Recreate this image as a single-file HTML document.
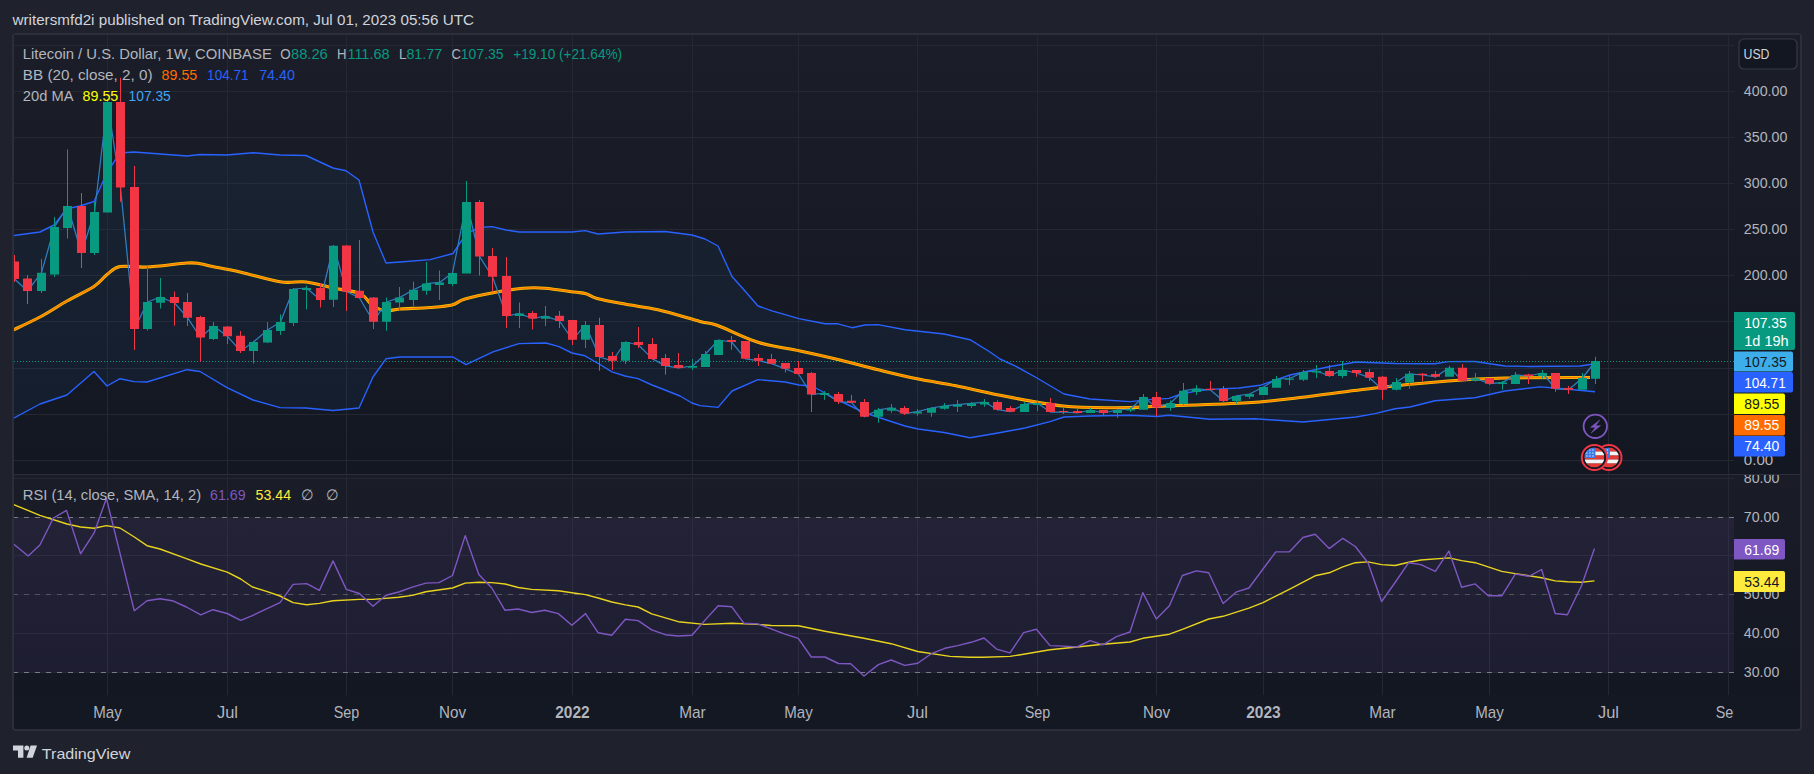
<!DOCTYPE html><html><head><meta charset="utf-8"><style>
html,body{margin:0;padding:0;width:1814px;height:774px;overflow:hidden;background:#1f222c;}
svg{position:absolute;left:0;top:0;display:block;}
text{font-family:"Liberation Sans",sans-serif;white-space:pre;}
</style></head><body>
<svg width="1814" height="774" viewBox="0 0 1814 774">
<defs>
<linearGradient id="bgm" gradientUnits="userSpaceOnUse" x1="0" y1="35" x2="0" y2="474"><stop offset="0" stop-color="#1b1e28"/><stop offset="1" stop-color="#131722"/></linearGradient>
<linearGradient id="bgr" gradientUnits="userSpaceOnUse" x1="0" y1="475" x2="0" y2="695"><stop offset="0" stop-color="#1a1d27"/><stop offset="1" stop-color="#131722"/></linearGradient>
<clipPath id="mainclip"><rect x="14" y="35" width="1720" height="439"/></clipPath>
<clipPath id="rsiclip"><rect x="14" y="476" width="1720" height="219"/></clipPath>
<clipPath id="flagc"><circle cx="0" cy="0" r="10"/></clipPath>
</defs>
<text x="12.5" y="24.8" font-size="15" fill="#d1d4dc" text-anchor="start" font-weight="normal" textLength="461.5" lengthAdjust="spacingAndGlyphs">writersmfd2i published on TradingView.com, Jul 01, 2023 05:56 UTC</text>
<rect x="13" y="34" width="1788" height="696" rx="3" fill="#141822" stroke="#2c2f3a" stroke-width="2"/>
<rect x="14" y="35" width="1786" height="440" fill="url(#bgm)"/>
<rect x="14" y="475" width="1786" height="220" fill="url(#bgr)"/>
<path d="M14,45.5H1734 M14,91.5H1734 M14,137.5H1734 M14,183.5H1734 M14,229.5H1734 M14,275.5H1734 M14,321.5H1734 M14,368.5H1734 M14,414.5H1734 M14,460.5H1734 M107.5,35V474 M107.5,476V695 M227.5,35V474 M227.5,476V695 M346.5,35V474 M346.5,476V695 M452.5,35V474 M452.5,476V695 M572.5,35V474 M572.5,476V695 M692.5,35V474 M692.5,476V695 M798.5,35V474 M798.5,476V695 M917.5,35V474 M917.5,476V695 M1037.5,35V474 M1037.5,476V695 M1156.5,35V474 M1156.5,476V695 M1263.5,35V474 M1263.5,476V695 M1382.5,35V474 M1382.5,476V695 M1489.5,35V474 M1489.5,476V695 M1608.5,35V474 M1608.5,476V695 M1728.5,35V474 M1728.5,476V695 M14,478.5H1734 M14,555.5H1734 M14,633.5H1734" stroke="#252732" stroke-width="1" fill="none"/>
<path d="M14,474.5H1800" stroke="#2c2f3a" stroke-width="1"/>
<g clip-path="url(#mainclip)">
<polygon points="12.0,235.8 40.0,232.0 54.0,225.0 67.0,208.7 80.0,206.0 94.0,201.5 107.0,172.5 120.0,153.0 134.0,152.0 187.0,156.0 200.0,154.5 227.0,155.0 253.0,152.7 280.0,155.0 306.0,155.5 320.0,162.0 333.0,168.0 346.0,170.7 359.0,180.0 373.0,232.0 386.0,263.0 400.0,262.0 430.0,259.6 453.0,253.5 466.0,234.0 479.0,227.5 492.0,226.6 506.0,230.0 519.0,232.0 546.0,232.0 572.0,232.0 585.0,230.6 598.0,234.0 625.0,232.0 665.0,231.5 692.0,235.0 705.0,239.0 718.0,246.0 732.0,276.5 745.0,291.0 758.0,306.0 772.0,310.8 799.0,318.6 825.0,323.8 838.0,323.8 852.0,327.7 865.0,325.0 878.0,324.6 905.0,329.7 944.0,334.0 970.0,339.7 990.0,352.0 1000.0,359.0 1015.0,365.8 1037.0,378.0 1064.0,394.0 1090.0,399.0 1130.0,401.6 1152.0,399.4 1169.0,398.4 1181.0,394.0 1195.0,391.2 1210.0,389.4 1239.0,388.0 1260.0,385.3 1290.0,375.0 1329.0,366.7 1356.0,362.0 1395.0,363.5 1435.0,363.7 1448.0,361.6 1475.0,361.5 1505.0,366.0 1530.0,366.5 1580.0,366.0 1595.0,363.7 1595.0,391.7 1555.0,388.0 1540.0,386.9 1505.0,391.0 1475.0,397.8 1435.0,400.8 1410.0,407.0 1395.0,408.8 1375.0,413.6 1356.0,417.0 1303.0,422.0 1255.0,418.8 1210.0,419.2 1169.0,415.2 1157.0,416.5 1130.0,415.2 1090.0,416.0 1064.0,417.0 1050.0,421.6 1025.0,428.0 998.0,433.0 970.0,437.8 944.0,432.5 918.0,429.0 905.0,426.0 865.0,413.0 838.0,400.0 812.0,386.0 799.0,385.0 785.0,382.0 758.0,379.6 732.0,391.0 718.0,407.4 700.0,405.6 692.0,403.0 680.0,396.0 665.0,390.0 652.0,385.0 638.0,378.6 625.0,376.0 612.0,371.8 599.0,364.0 585.0,355.8 572.0,353.0 559.0,346.6 546.0,343.0 519.0,343.6 493.0,351.8 466.0,364.7 453.0,357.0 430.0,357.0 400.0,357.0 386.0,358.8 373.0,377.0 359.0,408.0 333.0,410.5 306.0,408.0 280.0,407.6 253.0,400.0 227.0,387.7 200.0,371.5 187.0,369.7 147.0,382.0 134.0,381.6 120.0,378.7 107.0,386.0 94.0,371.5 67.0,395.0 40.0,404.0 12.0,419.0" fill="rgba(33,150,243,0.055)"/>
<polyline points="12.0,235.8 40.0,232.0 54.0,225.0 67.0,208.7 80.0,206.0 94.0,201.5 107.0,172.5 120.0,153.0 134.0,152.0 187.0,156.0 200.0,154.5 227.0,155.0 253.0,152.7 280.0,155.0 306.0,155.5 320.0,162.0 333.0,168.0 346.0,170.7 359.0,180.0 373.0,232.0 386.0,263.0 400.0,262.0 430.0,259.6 453.0,253.5 466.0,234.0 479.0,227.5 492.0,226.6 506.0,230.0 519.0,232.0 546.0,232.0 572.0,232.0 585.0,230.6 598.0,234.0 625.0,232.0 665.0,231.5 692.0,235.0 705.0,239.0 718.0,246.0 732.0,276.5 745.0,291.0 758.0,306.0 772.0,310.8 799.0,318.6 825.0,323.8 838.0,323.8 852.0,327.7 865.0,325.0 878.0,324.6 905.0,329.7 944.0,334.0 970.0,339.7 990.0,352.0 1000.0,359.0 1015.0,365.8 1037.0,378.0 1064.0,394.0 1090.0,399.0 1130.0,401.6 1152.0,399.4 1169.0,398.4 1181.0,394.0 1195.0,391.2 1210.0,389.4 1239.0,388.0 1260.0,385.3 1290.0,375.0 1329.0,366.7 1356.0,362.0 1395.0,363.5 1435.0,363.7 1448.0,361.6 1475.0,361.5 1505.0,366.0 1530.0,366.5 1580.0,366.0 1595.0,363.7" fill="none" stroke="#2962ff" stroke-width="1.4" stroke-linejoin="round"/>
<polyline points="12.0,419.0 40.0,404.0 67.0,395.0 94.0,371.5 107.0,386.0 120.0,378.7 134.0,381.6 147.0,382.0 187.0,369.7 200.0,371.5 227.0,387.7 253.0,400.0 280.0,407.6 306.0,408.0 333.0,410.5 359.0,408.0 373.0,377.0 386.0,358.8 400.0,357.0 430.0,357.0 453.0,357.0 466.0,364.7 493.0,351.8 519.0,343.6 546.0,343.0 559.0,346.6 572.0,353.0 585.0,355.8 599.0,364.0 612.0,371.8 625.0,376.0 638.0,378.6 652.0,385.0 665.0,390.0 680.0,396.0 692.0,403.0 700.0,405.6 718.0,407.4 732.0,391.0 758.0,379.6 785.0,382.0 799.0,385.0 812.0,386.0 838.0,400.0 865.0,413.0 905.0,426.0 918.0,429.0 944.0,432.5 970.0,437.8 998.0,433.0 1025.0,428.0 1050.0,421.6 1064.0,417.0 1090.0,416.0 1130.0,415.2 1157.0,416.5 1169.0,415.2 1210.0,419.2 1255.0,418.8 1303.0,422.0 1356.0,417.0 1375.0,413.6 1395.0,408.8 1410.0,407.0 1435.0,400.8 1475.0,397.8 1505.0,391.0 1540.0,386.9 1555.0,388.0 1595.0,391.7" fill="none" stroke="#2962ff" stroke-width="1.4" stroke-linejoin="round"/>
<path d="M14,361.5H1734" stroke="#089981" stroke-width="1" stroke-dasharray="1 2"/>
<path d="M12.0,330.6 C16.7,328.3 30.8,321.9 40.0,317.0 C49.2,312.1 58.0,306.1 67.0,301.0 C76.0,295.9 87.3,290.9 94.0,286.5 C100.7,282.1 102.7,277.8 107.0,274.5 C111.3,271.2 113.3,267.9 120.0,266.6 C126.7,265.4 135.8,267.6 147.0,267.0 C158.2,266.4 178.2,263.6 187.0,263.0 C195.8,262.4 196.2,263.2 200.0,263.7 C203.8,264.2 203.3,264.6 210.0,266.0 C216.7,267.4 228.3,269.4 240.0,272.0 C251.7,274.6 269.0,280.1 280.0,281.8 C291.0,283.5 297.2,281.0 306.0,282.0 C314.8,283.0 324.0,286.1 333.0,288.0 C342.0,289.9 353.3,290.7 360.0,293.7 C366.7,296.7 368.7,303.2 373.0,306.0 C377.3,308.8 381.5,310.2 386.0,310.7 C390.5,311.2 392.7,309.5 400.0,309.0 C407.3,308.5 421.3,308.2 430.0,307.5 C438.7,306.8 446.2,306.4 452.0,305.0 C457.8,303.6 457.5,301.2 465.0,299.0 C472.5,296.8 487.3,293.8 497.0,292.0 C506.7,290.2 515.0,288.8 523.0,288.2 C531.0,287.6 536.5,287.6 545.0,288.2 C553.5,288.8 567.2,291.1 574.0,292.0 C580.8,292.9 582.2,292.6 586.0,293.7 C589.8,294.8 590.3,296.7 597.0,298.5 C603.7,300.3 615.8,302.4 626.0,304.3 C636.2,306.2 645.7,307.0 658.0,309.8 C670.3,312.6 690.2,318.8 700.0,321.4 C709.8,324.0 707.3,321.8 717.0,325.3 C726.7,328.8 744.2,338.0 758.0,342.3 C771.8,346.6 786.3,348.1 800.0,351.0 C813.7,353.9 827.2,356.9 840.0,360.0 C852.8,363.1 864.2,366.4 877.0,369.5 C889.8,372.6 903.8,376.1 917.0,378.8 C930.2,381.5 942.2,383.1 956.0,385.8 C969.8,388.6 982.2,391.9 1000.0,395.3 C1017.8,398.7 1043.7,403.9 1063.0,406.0 C1082.3,408.1 1099.0,407.7 1116.0,407.7 C1133.0,407.7 1143.0,406.8 1165.0,406.0 C1187.0,405.2 1225.5,404.2 1248.0,402.8 C1270.5,401.4 1278.8,400.0 1300.0,397.5 C1321.2,395.0 1350.3,390.8 1375.0,388.0 C1399.7,385.2 1426.3,382.7 1448.0,381.0 C1469.7,379.3 1481.3,378.6 1505.0,378.0 C1528.7,377.4 1575.8,377.6 1590.0,377.5" fill="none" stroke="#f7c600" stroke-width="3.1" stroke-linejoin="round"/>
<path d="M12.0,330.6 C16.7,328.3 30.8,321.9 40.0,317.0 C49.2,312.1 58.0,306.1 67.0,301.0 C76.0,295.9 87.3,290.9 94.0,286.5 C100.7,282.1 102.7,277.8 107.0,274.5 C111.3,271.2 113.3,267.9 120.0,266.6 C126.7,265.4 135.8,267.6 147.0,267.0 C158.2,266.4 178.2,263.6 187.0,263.0 C195.8,262.4 196.2,263.2 200.0,263.7 C203.8,264.2 203.3,264.6 210.0,266.0 C216.7,267.4 228.3,269.4 240.0,272.0 C251.7,274.6 269.0,280.1 280.0,281.8 C291.0,283.5 297.2,281.0 306.0,282.0 C314.8,283.0 324.0,286.1 333.0,288.0 C342.0,289.9 353.3,290.7 360.0,293.7 C366.7,296.7 368.7,303.2 373.0,306.0 C377.3,308.8 381.5,310.2 386.0,310.7 C390.5,311.2 392.7,309.5 400.0,309.0 C407.3,308.5 421.3,308.2 430.0,307.5 C438.7,306.8 446.2,306.4 452.0,305.0 C457.8,303.6 457.5,301.2 465.0,299.0 C472.5,296.8 487.3,293.8 497.0,292.0 C506.7,290.2 515.0,288.8 523.0,288.2 C531.0,287.6 536.5,287.6 545.0,288.2 C553.5,288.8 567.2,291.1 574.0,292.0 C580.8,292.9 582.2,292.6 586.0,293.7 C589.8,294.8 590.3,296.7 597.0,298.5 C603.7,300.3 615.8,302.4 626.0,304.3 C636.2,306.2 645.7,307.0 658.0,309.8 C670.3,312.6 690.2,318.8 700.0,321.4 C709.8,324.0 707.3,321.8 717.0,325.3 C726.7,328.8 744.2,338.0 758.0,342.3 C771.8,346.6 786.3,348.1 800.0,351.0 C813.7,353.9 827.2,356.9 840.0,360.0 C852.8,363.1 864.2,366.4 877.0,369.5 C889.8,372.6 903.8,376.1 917.0,378.8 C930.2,381.5 942.2,383.1 956.0,385.8 C969.8,388.6 982.2,391.9 1000.0,395.3 C1017.8,398.7 1043.7,403.9 1063.0,406.0 C1082.3,408.1 1099.0,407.7 1116.0,407.7 C1133.0,407.7 1143.0,406.8 1165.0,406.0 C1187.0,405.2 1225.5,404.2 1248.0,402.8 C1270.5,401.4 1278.8,400.0 1300.0,397.5 C1321.2,395.0 1350.3,390.8 1375.0,388.0 C1399.7,385.2 1426.3,382.7 1448.0,381.0 C1469.7,379.3 1481.3,378.6 1505.0,378.0 C1528.7,377.4 1575.8,377.6 1590.0,377.5" fill="none" stroke="#ff7a00" stroke-width="1.5" stroke-linejoin="round"/>
<polyline points="14.0,268.0 14.5,279.0 27.5,291.0 41.5,272.7 54.5,227.0 67.5,206.0 81.5,253.0 94.5,212.0 107.5,102.0 120.5,187.5 134.5,329.0 147.5,302.0 160.5,297.0 174.5,303.0 187.5,317.7 200.5,337.6 213.5,326.0 227.5,336.3 240.5,351.0 253.5,342.0 267.5,330.0 280.5,322.0 293.5,289.0 306.5,288.0 320.5,300.0 333.5,245.7 346.5,291.5 359.5,298.0 373.5,321.7 386.5,302.0 399.5,297.6 413.5,289.8 426.5,283.6 439.5,282.4 452.5,273.0 466.5,202.0 479.5,256.4 492.5,276.8 506.5,316.0 519.5,313.6 532.5,318.5 545.5,316.2 559.5,321.0 572.5,339.7 585.5,324.9 599.5,357.0 612.5,360.8 625.5,342.0 638.5,345.0 652.5,358.9 665.5,365.9 678.5,367.8 692.5,366.0 705.5,354.0 718.5,340.0 731.5,342.0 745.5,358.8 758.5,360.7 771.5,363.7 785.5,368.8 798.5,374.0 811.5,394.6 824.5,393.0 838.5,401.7 851.5,402.7 864.5,416.8 878.5,409.8 891.5,407.8 904.5,413.6 917.5,411.7 931.5,408.0 944.5,405.9 957.5,404.6 971.5,403.3 984.5,402.0 997.5,409.7 1010.5,411.7 1024.5,404.0 1037.5,403.3 1050.5,412.0 1063.5,412.0 1077.5,413.0 1090.5,410.0 1103.5,413.0 1117.5,410.0 1130.5,409.0 1143.5,397.0 1156.5,407.5 1170.5,403.0 1183.5,390.7 1196.5,388.8 1210.5,390.0 1223.5,401.0 1236.5,395.9 1249.5,394.0 1263.5,387.0 1276.5,379.0 1289.5,378.5 1303.5,372.0 1316.5,371.0 1329.5,376.0 1342.5,370.0 1356.5,373.0 1369.5,377.7 1382.5,389.7 1396.5,382.0 1409.5,373.8 1422.5,375.0 1435.5,376.8 1449.5,367.8 1462.5,380.7 1475.5,378.5 1489.5,383.7 1502.5,382.6 1515.5,374.9 1528.5,376.0 1542.5,373.0 1555.5,388.8 1568.5,389.7 1582.5,378.0 1595.5,361.0" fill="none" stroke="#2f7fc0" stroke-width="1.25" stroke-linejoin="round"/>
<path d="M37.0,272.7h9v18.3h-9z M41.0,259.0h1v34.0h-1z M50.0,227.0h9v47.6h-9z M54.0,217.0h1v60.0h-1z M63.0,206.0h9v22.0h-9z M67.0,149.5h1v89.1h-1z M90.0,212.0h9v41.0h-9z M94.0,202.0h1v53.0h-1z M103.0,102.0h9v110.6h-9z M107.0,99.0h1v113.6h-1z M143.0,302.0h9v27.0h-9z M147.0,266.6h1v63.9h-1z M156.0,297.0h9v5.7h-9z M160.0,278.0h1v30.6h-1z M209.0,326.0h9v13.0h-9z M213.0,322.0h1v18.0h-1z M249.0,342.0h9v9.0h-9z M253.0,340.7h1v22.9h-1z M263.0,330.0h9v12.5h-9z M267.0,322.0h1v21.0h-1z M276.0,322.0h9v9.0h-9z M280.0,314.5h1v20.5h-1z M289.0,289.0h9v34.0h-9z M293.0,288.0h1v38.0h-1z M302.0,288.0h9v2.0h-9z M306.0,285.5h1v24.1h-1z M329.0,245.7h9v54.0h-9z M333.0,245.0h1v62.0h-1z M382.0,302.0h9v19.7h-9z M386.0,297.6h1v33.2h-1z M395.0,297.6h9v4.9h-9z M399.0,287.0h1v24.0h-1z M409.0,289.8h9v10.2h-9z M413.0,281.7h1v24.3h-1z M422.0,283.6h9v7.2h-9z M426.0,262.0h1v32.7h-1z M435.0,282.4h9v2.6h-9z M439.0,270.6h1v29.4h-1z M448.0,273.0h9v11.0h-9z M452.0,273.0h1v12.9h-1z M462.0,202.0h9v71.6h-9z M466.0,181.0h1v92.6h-1z M515.0,313.6h9v2.4h-9z M519.0,302.5h1v25.5h-1z M541.0,316.2h9v2.5h-9z M545.0,306.0h1v20.0h-1z M581.0,324.9h9v14.8h-9z M585.0,321.0h1v27.0h-1z M621.0,342.0h9v18.8h-9z M625.0,342.0h1v22.0h-1z M688.0,366.0h9v1.8h-9z M692.0,359.0h1v11.0h-1z M701.0,354.0h9v13.0h-9z M705.0,351.0h1v16.0h-1z M714.0,340.0h9v15.0h-9z M718.0,340.0h1v15.0h-1z M820.0,393.0h9v2.0h-9z M824.0,391.0h1v8.8h-1z M874.0,409.8h9v7.0h-9z M878.0,408.0h1v14.8h-1z M887.0,407.8h9v2.9h-9z M891.0,404.0h1v8.7h-1z M913.0,411.7h9v1.9h-9z M917.0,409.0h1v6.8h-1z M927.0,408.0h9v4.7h-9z M931.0,407.0h1v9.8h-1z M940.0,405.9h9v2.9h-9z M944.0,403.0h1v6.7h-1z M953.0,404.6h9v2.2h-9z M957.0,400.0h1v12.0h-1z M967.0,403.3h9v2.6h-9z M971.0,402.0h1v5.8h-1z M980.0,402.0h9v2.6h-9z M984.0,399.0h1v7.8h-1z M1020.0,404.0h9v8.0h-9z M1024.0,402.0h1v10.0h-1z M1033.0,403.3h9v1.7h-9z M1037.0,400.0h1v11.0h-1z M1086.0,410.0h9v3.0h-9z M1090.0,408.0h1v5.0h-1z M1113.0,410.0h9v3.0h-9z M1117.0,410.0h1v8.0h-1z M1126.0,409.0h9v1.6h-9z M1130.0,407.5h1v4.5h-1z M1139.0,397.0h9v12.7h-9z M1143.0,394.0h1v15.7h-1z M1166.0,403.0h9v5.0h-9z M1170.0,400.6h1v10.1h-1z M1179.0,390.7h9v13.3h-9z M1183.0,383.0h1v22.0h-1z M1192.0,388.8h9v3.2h-9z M1196.0,384.9h1v10.1h-1z M1232.0,395.9h9v5.1h-9z M1236.0,395.9h1v7.7h-1z M1245.0,394.0h9v2.8h-9z M1249.0,394.0h1v4.8h-1z M1259.0,387.0h9v8.0h-9z M1263.0,387.0h1v8.0h-1z M1272.0,379.0h9v8.8h-9z M1276.0,376.0h1v11.8h-1z M1285.0,378.5h9v1.3h-9z M1289.0,375.0h1v10.0h-1z M1299.0,372.0h9v7.8h-9z M1303.0,370.0h1v11.0h-1z M1312.0,371.0h9v1.6h-9z M1316.0,365.0h1v13.0h-1z M1338.0,370.0h9v6.0h-9z M1342.0,361.0h1v17.0h-1z M1392.0,382.0h9v7.7h-9z M1396.0,378.0h1v12.6h-1z M1405.0,373.8h9v8.8h-9z M1409.0,371.0h1v17.8h-1z M1445.0,367.8h9v9.0h-9z M1449.0,365.8h1v11.0h-1z M1471.0,378.5h9v2.2h-9z M1475.0,373.0h1v8.6h-1z M1498.0,382.6h9v1.4h-9z M1502.0,381.0h1v8.7h-1z M1511.0,374.9h9v9.1h-9z M1515.0,372.0h1v12.0h-1z M1538.0,373.0h9v3.0h-9z M1542.0,370.0h1v8.8h-1z M1578.0,378.0h9v11.7h-9z M1582.0,373.0h1v16.7h-1z M1591.0,361.0h9v17.8h-9z M1595.0,356.8h1v27.2h-1z" fill="#089981"/>
<path d="M10.0,261.6h9v17.4h-9z M14.0,255.0h1v27.0h-1z M23.0,278.5h9v12.5h-9z M27.0,275.0h1v29.0h-1z M77.0,206.0h9v47.0h-9z M81.0,193.0h1v75.0h-1z M116.0,102.0h9v85.5h-9z M120.0,77.7h1v124.0h-1z M130.0,187.0h9v142.0h-9z M134.0,166.0h1v184.0h-1z M170.0,297.0h9v6.0h-9z M174.0,291.6h1v34.1h-1z M183.0,302.0h9v15.7h-9z M187.0,293.0h1v33.0h-1z M196.0,317.0h9v20.6h-9z M200.0,315.8h1v46.0h-1z M223.0,326.5h9v9.8h-9z M227.0,326.0h1v18.0h-1z M236.0,335.8h9v15.2h-9z M240.0,331.0h1v22.0h-1z M316.0,288.0h9v12.0h-9z M320.0,283.0h1v24.6h-1z M342.0,245.6h9v45.9h-9z M346.0,245.0h1v66.0h-1z M355.0,290.8h9v7.2h-9z M359.0,240.0h1v58.0h-1z M369.0,297.6h9v24.1h-9z M373.0,297.0h1v32.0h-1z M475.0,202.0h9v54.4h-9z M479.0,200.0h1v75.5h-1z M488.0,256.0h9v20.8h-9z M492.0,248.0h1v43.5h-1z M502.0,276.0h9v40.0h-9z M506.0,257.0h1v71.0h-1z M528.0,313.0h9v5.5h-9z M532.0,311.0h1v18.5h-1z M555.0,315.8h9v5.2h-9z M559.0,311.0h1v17.0h-1z M568.0,320.0h9v19.7h-9z M572.0,320.0h1v25.0h-1z M595.0,324.9h9v32.1h-9z M599.0,317.8h1v52.9h-1z M608.0,356.0h9v4.8h-9z M612.0,352.0h1v18.0h-1z M634.0,342.0h9v3.0h-9z M638.0,327.0h1v20.9h-1z M648.0,344.0h9v14.9h-9z M652.0,338.0h1v21.8h-1z M661.0,358.0h9v7.9h-9z M665.0,354.0h1v20.7h-1z M674.0,365.0h9v2.8h-9z M678.0,353.0h1v15.5h-1z M727.0,340.0h9v2.0h-9z M731.0,336.0h1v13.7h-1z M741.0,341.0h9v17.8h-9z M745.0,341.0h1v17.8h-1z M754.0,358.0h9v2.7h-9z M758.0,354.0h1v12.0h-1z M767.0,359.0h9v4.7h-9z M771.0,354.0h1v9.7h-1z M781.0,363.0h9v5.8h-9z M785.0,363.0h1v9.6h-1z M794.0,367.9h9v6.1h-9z M798.0,361.0h1v13.6h-1z M807.0,373.0h9v21.6h-9z M811.0,372.0h1v40.0h-1z M834.0,394.0h9v7.7h-9z M838.0,392.0h1v12.0h-1z M847.0,400.8h9v1.9h-9z M851.0,395.0h1v7.7h-1z M860.0,402.0h9v14.8h-9z M864.0,399.0h1v17.8h-1z M900.0,408.0h9v5.6h-9z M904.0,406.0h1v9.0h-1z M993.0,402.0h9v7.7h-9z M997.0,400.3h1v10.3h-1z M1006.0,408.0h9v3.7h-9z M1010.0,406.0h1v5.7h-1z M1046.0,403.0h9v9.0h-9z M1050.0,398.0h1v14.0h-1z M1059.0,411.0h9v1.0h-9z M1063.0,408.0h1v6.0h-1z M1073.0,411.0h9v2.0h-9z M1077.0,408.8h1v4.2h-1z M1099.0,410.0h9v3.0h-9z M1103.0,410.0h1v5.0h-1z M1152.0,397.0h9v10.5h-9z M1156.0,392.0h1v24.0h-1z M1206.0,388.8h9v1.2h-9z M1210.0,381.0h1v9.0h-1z M1219.0,389.0h9v12.0h-9z M1223.0,386.0h1v16.0h-1z M1325.0,371.0h9v5.0h-9z M1329.0,365.0h1v11.8h-1z M1352.0,370.0h9v3.0h-9z M1356.0,370.0h1v6.8h-1z M1365.0,372.0h9v5.7h-9z M1369.0,369.0h1v12.0h-1z M1378.0,376.8h9v12.9h-9z M1382.0,376.0h1v23.7h-1z M1418.0,373.8h9v1.2h-9z M1422.0,373.0h1v8.0h-1z M1431.0,374.0h9v2.8h-9z M1435.0,371.0h1v6.7h-1z M1458.0,367.8h9v12.9h-9z M1462.0,364.0h1v17.6h-1z M1485.0,378.0h9v5.7h-9z M1489.0,378.0h1v7.0h-1z M1524.0,374.6h9v1.4h-9z M1528.0,373.8h1v10.2h-1z M1551.0,373.0h9v15.8h-9z M1555.0,373.0h1v18.7h-1z M1564.0,388.0h9v1.7h-9z M1568.0,386.0h1v8.0h-1z" fill="#f23645"/>
</g>
<g clip-path="url(#rsiclip)">
<rect x="14" y="518" width="1720" height="154" fill="rgba(126,87,194,0.10)"/>
<path d="M14,517.5H1734 M14,594.5H1734 M14,672.5H1734" stroke="#252732" stroke-width="1" fill="none"/>
<path d="M14,517.5H1734 M14,672.5H1734" stroke="#787b86" stroke-width="1" stroke-dasharray="5 6" stroke-dashoffset="1" fill="none"/>
<path d="M14,594.5H1734" stroke="#787b86" stroke-opacity="0.55" stroke-width="1" stroke-dasharray="5 6" stroke-dashoffset="1" fill="none"/>
<polyline points="13.3,504.4 39.9,515.3 67.0,524.0 80.6,527.0 94.1,528.3 106.4,525.6 120.0,528.0 134.3,537.0 147.0,545.7 160.0,549.0 186.4,558.7 200.8,564.0 227.2,572.2 240.7,579.0 252.4,587.0 266.5,591.3 280.0,596.0 293.1,602.6 306.7,604.8 319.4,603.4 333.0,600.8 359.4,599.4 373.0,599.4 398.7,597.3 412.3,595.4 425.9,591.8 452.5,588.0 465.2,583.1 478.8,582.3 491.8,582.6 505.0,584.0 518.2,587.5 531.7,589.4 558.3,590.8 571.9,592.7 585.5,594.6 598.2,598.0 611.8,602.0 625.4,604.9 638.1,607.0 651.7,613.8 678.3,621.7 704.6,624.4 731.8,623.3 757.6,624.4 771.2,625.5 798.3,625.8 824.9,631.2 864.0,638.3 891.1,643.7 917.7,651.5 950.0,656.4 969.9,657.3 983.4,657.3 1010.0,656.4 1023.6,654.3 1050.0,649.7 1077.0,647.0 1102.9,644.2 1130.0,642.0 1142.8,638.3 1169.4,634.2 1182.4,629.3 1208.7,619.0 1223.1,616.3 1248.9,608.1 1263.0,602.6 1289.3,589.3 1315.1,575.8 1329.2,572.8 1342.8,566.8 1355.3,562.7 1368.0,561.9 1381.6,564.6 1395.1,565.5 1408.7,562.2 1420.9,560.0 1448.9,557.9 1461.6,560.6 1475.2,562.7 1501.8,571.4 1515.3,573.6 1541.6,577.7 1555.2,580.9 1567.4,581.7 1581.5,582.3 1594.5,580.9" fill="none" stroke="#e8d31e" stroke-width="1.4" stroke-linejoin="round"/>
<polyline points="13.3,543.8 28.2,556.0 39.9,545.0 53.4,518.0 66.5,510.4 80.6,553.8 94.1,532.9 106.4,498.4 134.3,610.8 147.0,600.7 160.0,598.8 172.3,600.7 186.4,607.0 200.8,614.8 213.0,609.7 227.2,613.5 240.7,620.3 252.4,615.6 266.5,608.9 280.0,602.6 293.1,584.4 306.7,583.6 319.4,590.4 333.0,560.9 346.3,589.4 359.4,593.5 373.0,606.2 386.0,595.3 398.7,592.0 412.3,587.2 425.9,583.1 438.9,582.6 452.5,575.5 465.2,535.6 478.8,574.4 491.8,588.0 505.0,610.3 518.2,609.0 531.7,612.5 544.8,610.3 558.3,613.6 571.9,625.2 585.5,613.6 598.2,632.8 611.8,635.3 625.4,619.3 638.1,620.6 651.7,629.8 665.3,634.7 678.3,636.0 691.9,635.3 704.6,620.6 718.2,605.7 731.8,606.8 744.0,623.3 757.6,623.9 771.2,628.8 784.2,633.9 798.3,638.3 811.3,657.0 824.9,657.0 838.5,663.5 850.7,663.8 864.0,676.0 878.4,664.6 891.1,660.0 904.7,665.4 917.7,663.2 931.3,653.7 944.9,648.3 957.6,645.6 971.2,642.3 984.0,638.0 996.5,649.1 1010.0,652.9 1023.6,632.6 1036.4,629.3 1050.0,645.6 1063.5,646.1 1077.0,647.0 1090.0,640.7 1102.9,644.8 1116.4,636.6 1130.0,632.0 1142.8,592.6 1156.3,619.0 1169.4,605.7 1182.4,575.5 1196.5,570.9 1208.7,572.8 1223.1,603.5 1236.7,591.8 1248.9,588.0 1263.0,569.0 1275.8,551.9 1289.3,551.9 1302.9,537.5 1315.1,534.3 1329.2,548.6 1342.8,538.3 1355.3,546.5 1368.0,562.7 1381.6,601.5 1395.1,582.5 1408.7,562.7 1420.9,564.6 1435.3,571.4 1448.9,551.1 1461.6,587.2 1475.2,583.9 1488.2,595.8 1501.8,595.8 1515.3,574.1 1528.9,576.3 1541.6,569.5 1555.2,613.5 1567.4,614.8 1581.5,585.8 1594.5,548.4" fill="none" stroke="#7e57c2" stroke-width="1.4" stroke-linejoin="round"/>
</g>
<text x="22.8" y="58.7" font-size="15" fill="#b2b5be" text-anchor="start" font-weight="normal" textLength="249.0" lengthAdjust="spacingAndGlyphs">Litecoin / U.S. Dollar, 1W, COINBASE</text>
<text x="280.2" y="58.7" font-size="15" fill="#b2b5be" text-anchor="start" font-weight="normal" textLength="10.4" lengthAdjust="spacingAndGlyphs">O</text>
<text x="291.0" y="58.7" font-size="15" fill="#089981" text-anchor="start" font-weight="normal" textLength="36.8" lengthAdjust="spacingAndGlyphs">88.26</text>
<text x="337.0" y="58.7" font-size="15" fill="#b2b5be" text-anchor="start" font-weight="normal" textLength="9.5" lengthAdjust="spacingAndGlyphs">H</text>
<text x="347.4" y="58.7" font-size="15" fill="#089981" text-anchor="start" font-weight="normal" textLength="42.2" lengthAdjust="spacingAndGlyphs">111.68</text>
<text x="398.9" y="58.7" font-size="15" fill="#b2b5be" text-anchor="start" font-weight="normal" textLength="7.6" lengthAdjust="spacingAndGlyphs">L</text>
<text x="406.4" y="58.7" font-size="15" fill="#089981" text-anchor="start" font-weight="normal" textLength="35.7" lengthAdjust="spacingAndGlyphs">81.77</text>
<text x="451.4" y="58.7" font-size="15" fill="#b2b5be" text-anchor="start" font-weight="normal" textLength="9.4" lengthAdjust="spacingAndGlyphs">C</text>
<text x="460.8" y="58.7" font-size="15" fill="#089981" text-anchor="start" font-weight="normal" textLength="42.8" lengthAdjust="spacingAndGlyphs">107.35</text>
<text x="513.3" y="58.7" font-size="15" fill="#089981" text-anchor="start" font-weight="normal" textLength="108.8" lengthAdjust="spacingAndGlyphs">+19.10 (+21.64%)</text>
<text x="22.8" y="80.2" font-size="15" fill="#b2b5be" text-anchor="start" font-weight="normal" textLength="129.7" lengthAdjust="spacingAndGlyphs">BB (20, close, 2, 0)</text>
<text x="161.6" y="80.2" font-size="15" fill="#ff6d00" text-anchor="start" font-weight="normal" textLength="35.7" lengthAdjust="spacingAndGlyphs">89.55</text>
<text x="207.1" y="80.2" font-size="15" fill="#2962ff" text-anchor="start" font-weight="normal" textLength="41.5" lengthAdjust="spacingAndGlyphs">104.71</text>
<text x="259.2" y="80.2" font-size="15" fill="#2962ff" text-anchor="start" font-weight="normal" textLength="35.7" lengthAdjust="spacingAndGlyphs">74.40</text>
<text x="22.8" y="100.5" font-size="15" fill="#b2b5be" text-anchor="start" font-weight="normal" textLength="50.7" lengthAdjust="spacingAndGlyphs">20d MA</text>
<text x="82.6" y="100.5" font-size="15" fill="#ffff00" text-anchor="start" font-weight="normal" textLength="35.7" lengthAdjust="spacingAndGlyphs">89.55</text>
<text x="128.6" y="100.5" font-size="15" fill="#42a5f5" text-anchor="start" font-weight="normal" textLength="42.2" lengthAdjust="spacingAndGlyphs">107.35</text>
<text x="22.8" y="499.6" font-size="15" fill="#b2b5be" text-anchor="start" font-weight="normal" textLength="178.3" lengthAdjust="spacingAndGlyphs">RSI (14, close, SMA, 14, 2)</text>
<text x="210.1" y="499.6" font-size="15" fill="#7e57c2" text-anchor="start" font-weight="normal" textLength="35.5" lengthAdjust="spacingAndGlyphs">61.69</text>
<text x="255.6" y="499.6" font-size="15" fill="#ffeb3b" text-anchor="start" font-weight="normal" textLength="35.5" lengthAdjust="spacingAndGlyphs">53.44</text>
<text x="301" y="499.6" font-size="15" fill="#b2b5be" text-anchor="start" font-weight="normal" textLength="12.5" lengthAdjust="spacingAndGlyphs">∅</text>
<text x="325.5" y="499.6" font-size="15" fill="#b2b5be" text-anchor="start" font-weight="normal" textLength="12.5" lengthAdjust="spacingAndGlyphs">∅</text>
<text x="1743.8" y="96.2" font-size="15.5" fill="#b2b5be" text-anchor="start" font-weight="normal" textLength="43.6" lengthAdjust="spacingAndGlyphs">400.00</text>
<text x="1743.8" y="142.2" font-size="15.5" fill="#b2b5be" text-anchor="start" font-weight="normal" textLength="43.6" lengthAdjust="spacingAndGlyphs">350.00</text>
<text x="1743.8" y="188.2" font-size="15.5" fill="#b2b5be" text-anchor="start" font-weight="normal" textLength="43.6" lengthAdjust="spacingAndGlyphs">300.00</text>
<text x="1743.8" y="234.2" font-size="15.5" fill="#b2b5be" text-anchor="start" font-weight="normal" textLength="43.6" lengthAdjust="spacingAndGlyphs">250.00</text>
<text x="1743.8" y="280.2" font-size="15.5" fill="#b2b5be" text-anchor="start" font-weight="normal" textLength="43.6" lengthAdjust="spacingAndGlyphs">200.00</text>
<text x="1743.8" y="465.2" font-size="15.5" fill="#b2b5be" text-anchor="start" font-weight="normal" textLength="29.5" lengthAdjust="spacingAndGlyphs">0.00</text>
<clipPath id="raxclip"><rect x="1734" y="475" width="66" height="220"/></clipPath>
<g clip-path="url(#raxclip)">
<text x="1743.8" y="483.2" font-size="15.5" fill="#b2b5be" text-anchor="start" font-weight="normal" textLength="35.5" lengthAdjust="spacingAndGlyphs">80.00</text>
<text x="1743.8" y="522.2" font-size="15.5" fill="#b2b5be" text-anchor="start" font-weight="normal" textLength="35.5" lengthAdjust="spacingAndGlyphs">70.00</text>
<text x="1743.8" y="599.2" font-size="15.5" fill="#b2b5be" text-anchor="start" font-weight="normal" textLength="35.5" lengthAdjust="spacingAndGlyphs">50.00</text>
<text x="1743.8" y="638.2" font-size="15.5" fill="#b2b5be" text-anchor="start" font-weight="normal" textLength="35.5" lengthAdjust="spacingAndGlyphs">40.00</text>
<text x="1743.8" y="677.2" font-size="15.5" fill="#b2b5be" text-anchor="start" font-weight="normal" textLength="35.5" lengthAdjust="spacingAndGlyphs">30.00</text>
</g>
<rect x="1739" y="39" width="58" height="30" rx="5" fill="#131722" stroke="#363a45" stroke-width="1.2"/>
<text x="1743.5" y="58.5" font-size="15" fill="#d1d4dc" text-anchor="start" font-weight="normal" textLength="26" lengthAdjust="spacingAndGlyphs">USD</text>
<path d="M1734,312H1793Q1795,312 1795,314V348Q1795,350 1793,350H1734Z" fill="#089981"/>
<text x="1744.2" y="328" font-size="15" fill="#ffffff" text-anchor="start" font-weight="normal" textLength="42.5" lengthAdjust="spacingAndGlyphs">107.35</text>
<text x="1744.2" y="345.5" font-size="15" fill="#ffffff" text-anchor="start" font-weight="normal" textLength="44.5" lengthAdjust="spacingAndGlyphs">1d 19h</text>
<path d="M1734,351.5H1791Q1793,351.5 1793,353.5V369.5Q1793,371.5 1791,371.5H1734Z" fill="#3daee9"/>
<text x="1744.2" y="367" font-size="15" fill="#131722" text-anchor="start" font-weight="normal" textLength="42.5" lengthAdjust="spacingAndGlyphs">107.35</text>
<path d="M1734,372H1791Q1793,372 1793,374V390.5Q1793,392.5 1791,392.5H1734Z" fill="#2962ff"/>
<text x="1744.2" y="388" font-size="15" fill="#ffffff" text-anchor="start" font-weight="normal" textLength="41.5" lengthAdjust="spacingAndGlyphs">104.71</text>
<path d="M1734,393.5H1783Q1785,393.5 1785,395.5V412Q1785,414 1783,414H1734Z" fill="#ffff00"/>
<text x="1744.2" y="409" font-size="15" fill="#131722" text-anchor="start" font-weight="normal" textLength="35" lengthAdjust="spacingAndGlyphs">89.55</text>
<path d="M1734,415H1783Q1785,415 1785,417V433.5Q1785,435.5 1783,435.5H1734Z" fill="#ff6d00"/>
<text x="1744.2" y="430" font-size="15" fill="#ffffff" text-anchor="start" font-weight="normal" textLength="35" lengthAdjust="spacingAndGlyphs">89.55</text>
<path d="M1734,436H1783Q1785,436 1785,438V454.5Q1785,456.5 1783,456.5H1734Z" fill="#2962ff"/>
<text x="1744.2" y="451.2" font-size="15" fill="#ffffff" text-anchor="start" font-weight="normal" textLength="35" lengthAdjust="spacingAndGlyphs">74.40</text>
<path d="M1734,539H1783Q1785,539 1785,541V557.5Q1785,559.5 1783,559.5H1734Z" fill="#7e57c2"/>
<text x="1744.2" y="554.5" font-size="15" fill="#ffffff" text-anchor="start" font-weight="normal" textLength="35" lengthAdjust="spacingAndGlyphs">61.69</text>
<path d="M1734,571H1783Q1785,571 1785,573V590Q1785,592 1783,592H1734Z" fill="#ffeb3b"/>
<text x="1744.2" y="586.5" font-size="15" fill="#131722" text-anchor="start" font-weight="normal" textLength="35" lengthAdjust="spacingAndGlyphs">53.44</text>
<text x="107.5" y="717.9" font-size="15.7" fill="#b2b5be" text-anchor="middle" font-weight="normal" textLength="28.5" lengthAdjust="spacingAndGlyphs">May</text>
<text x="227.5" y="717.9" font-size="15.7" fill="#b2b5be" text-anchor="middle" font-weight="normal" textLength="21" lengthAdjust="spacingAndGlyphs">Jul</text>
<text x="346.5" y="717.9" font-size="15.7" fill="#b2b5be" text-anchor="middle" font-weight="normal" textLength="25.5" lengthAdjust="spacingAndGlyphs">Sep</text>
<text x="452.5" y="717.9" font-size="15.7" fill="#b2b5be" text-anchor="middle" font-weight="normal" textLength="27" lengthAdjust="spacingAndGlyphs">Nov</text>
<text x="572.5" y="717.9" font-size="15.7" fill="#b2b5be" text-anchor="middle" font-weight="bold" textLength="34.5" lengthAdjust="spacingAndGlyphs">2022</text>
<text x="692.5" y="717.9" font-size="15.7" fill="#b2b5be" text-anchor="middle" font-weight="normal" textLength="26.5" lengthAdjust="spacingAndGlyphs">Mar</text>
<text x="798.5" y="717.9" font-size="15.7" fill="#b2b5be" text-anchor="middle" font-weight="normal" textLength="28.5" lengthAdjust="spacingAndGlyphs">May</text>
<text x="917.5" y="717.9" font-size="15.7" fill="#b2b5be" text-anchor="middle" font-weight="normal" textLength="21" lengthAdjust="spacingAndGlyphs">Jul</text>
<text x="1037.5" y="717.9" font-size="15.7" fill="#b2b5be" text-anchor="middle" font-weight="normal" textLength="25.5" lengthAdjust="spacingAndGlyphs">Sep</text>
<text x="1156.5" y="717.9" font-size="15.7" fill="#b2b5be" text-anchor="middle" font-weight="normal" textLength="27" lengthAdjust="spacingAndGlyphs">Nov</text>
<text x="1263.5" y="717.9" font-size="15.7" fill="#b2b5be" text-anchor="middle" font-weight="bold" textLength="34.5" lengthAdjust="spacingAndGlyphs">2023</text>
<text x="1382.5" y="717.9" font-size="15.7" fill="#b2b5be" text-anchor="middle" font-weight="normal" textLength="26.5" lengthAdjust="spacingAndGlyphs">Mar</text>
<text x="1489.5" y="717.9" font-size="15.7" fill="#b2b5be" text-anchor="middle" font-weight="normal" textLength="28.5" lengthAdjust="spacingAndGlyphs">May</text>
<text x="1608.5" y="717.9" font-size="15.7" fill="#b2b5be" text-anchor="middle" font-weight="normal" textLength="21" lengthAdjust="spacingAndGlyphs">Jul</text>
<svg x="14" y="700" width="1720" height="28" overflow="hidden"><text x="1714.5" y="17.9" font-size="15.7" fill="#b2b5be" text-anchor="middle" textLength="25.5" lengthAdjust="spacingAndGlyphs">Sep</text></svg>
<circle cx="1595.3" cy="426.3" r="11.7" fill="#131722" stroke="#7e57c2" stroke-width="1.8"/>
<path transform="translate(1595.3,426.3)" d="M4.5,-6.3 L-4.8,1 L0.2,1 L-4.1,6.8 L5.2,-0.6 L0.3,-0.6 Z" fill="#7e57c2" stroke="#7e57c2" stroke-width="0.5" stroke-linejoin="round"/>
<g transform="translate(1608.9,457.5)">
<circle r="12.6" fill="#131722" stroke="#f23645" stroke-width="2"/>
<g clip-path="url(#flagc)">
<rect x="-10" y="-10.00" width="20" height="4.1" fill="#e53935"/>
<rect x="-10" y="-6.00" width="20" height="4.1" fill="#f4f4f4"/>
<rect x="-10" y="-2.00" width="20" height="4.1" fill="#e53935"/>
<rect x="-10" y="2.00" width="20" height="4.1" fill="#f4f4f4"/>
<rect x="-10" y="6.00" width="20" height="4.1" fill="#e53935"/>
<rect x="-10" y="-10" width="11" height="10.5" fill="#3b7be8"/>
<rect x="-8.1" y="-8.1" width="1.2" height="1.2" fill="#dfe8ff"/>
<rect x="-8.1" y="-5.1" width="1.2" height="1.2" fill="#dfe8ff"/>
<rect x="-8.1" y="-2.1" width="1.2" height="1.2" fill="#dfe8ff"/>
<rect x="-5.1" y="-8.1" width="1.2" height="1.2" fill="#dfe8ff"/>
<rect x="-5.1" y="-5.1" width="1.2" height="1.2" fill="#dfe8ff"/>
<rect x="-5.1" y="-2.1" width="1.2" height="1.2" fill="#dfe8ff"/>
<rect x="-2.1" y="-8.1" width="1.2" height="1.2" fill="#dfe8ff"/>
<rect x="-2.1" y="-5.1" width="1.2" height="1.2" fill="#dfe8ff"/>
<rect x="-2.1" y="-2.1" width="1.2" height="1.2" fill="#dfe8ff"/>
</g></g>
<g transform="translate(1594.4,457.5)">
<circle r="12.6" fill="#131722" stroke="#f23645" stroke-width="2"/>
<g clip-path="url(#flagc)">
<rect x="-10" y="-10.00" width="20" height="4.1" fill="#e53935"/>
<rect x="-10" y="-6.00" width="20" height="4.1" fill="#f4f4f4"/>
<rect x="-10" y="-2.00" width="20" height="4.1" fill="#e53935"/>
<rect x="-10" y="2.00" width="20" height="4.1" fill="#f4f4f4"/>
<rect x="-10" y="6.00" width="20" height="4.1" fill="#e53935"/>
<rect x="-10" y="-10" width="11" height="10.5" fill="#3b7be8"/>
<rect x="-8.1" y="-8.1" width="1.2" height="1.2" fill="#dfe8ff"/>
<rect x="-8.1" y="-5.1" width="1.2" height="1.2" fill="#dfe8ff"/>
<rect x="-8.1" y="-2.1" width="1.2" height="1.2" fill="#dfe8ff"/>
<rect x="-5.1" y="-8.1" width="1.2" height="1.2" fill="#dfe8ff"/>
<rect x="-5.1" y="-5.1" width="1.2" height="1.2" fill="#dfe8ff"/>
<rect x="-5.1" y="-2.1" width="1.2" height="1.2" fill="#dfe8ff"/>
<rect x="-2.1" y="-8.1" width="1.2" height="1.2" fill="#dfe8ff"/>
<rect x="-2.1" y="-5.1" width="1.2" height="1.2" fill="#dfe8ff"/>
<rect x="-2.1" y="-2.1" width="1.2" height="1.2" fill="#dfe8ff"/>
</g></g>
<g fill="#d1d4dc" transform="translate(13,745.5)"><path d="M0,0H10.4V12.2H5V5H0Z"/><circle cx="13.8" cy="2.5" r="2.5"/><path d="M17.6,0H24L19.7,12.2H13.6Z"/></g>
<text x="41.8" y="758.8" font-size="15" fill="#d1d4dc" text-anchor="start" font-weight="normal" textLength="88.5" lengthAdjust="spacingAndGlyphs">TradingView</text>
</svg></body></html>
